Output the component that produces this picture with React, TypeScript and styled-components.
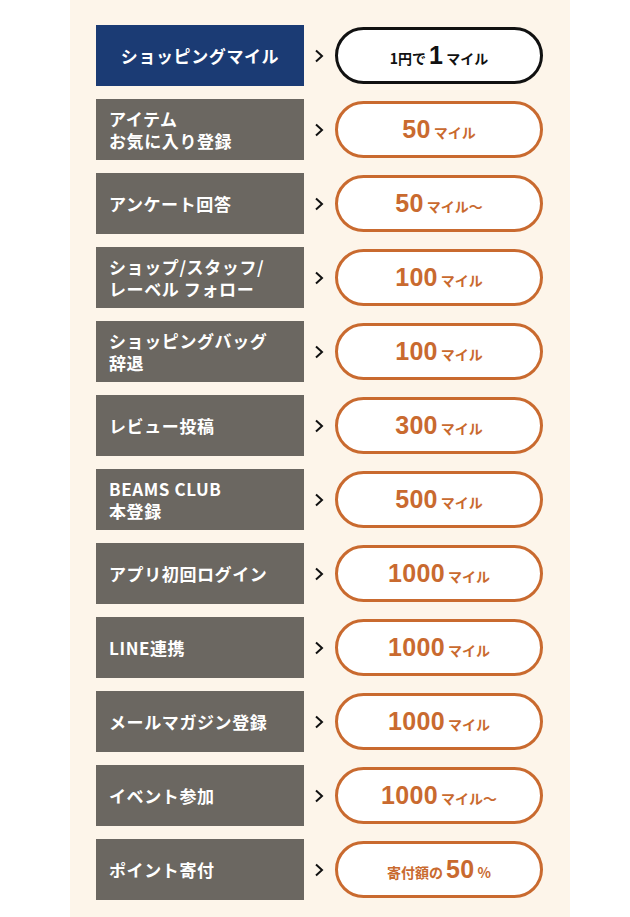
import React from "react";
import styled, { createGlobalStyle } from "styled-components";

const Global = createGlobalStyle`
  html, body { margin: 0; padding: 0; background: #ffffff; }
  body { font-family: "Noto Sans CJK JP", "Noto Sans", sans-serif; }
`;

const Page = styled.div`
  display: flex;
  justify-content: center;
  min-height: 917px;
`;

const Panel = styled.div`
  width: 500px;
  margin-left: 10px;
  background: #fdf5ea;
  padding: 25px 27px 17px 26px;
  box-sizing: border-box;
  display: flex;
  flex-direction: column;
  gap: 13px;
`;

const Row = styled.div`
  display: grid;
  grid-template-columns: 208px 31px 208px;
  align-items: center;
  height: 61px;
`;

const Label = styled.div<{ $primary?: boolean }>`
  height: 61px;
  box-sizing: border-box;
  background: ${(p) => (p.$primary ? "#1b3b74" : "#6b6761")};
  color: #ffffff;
  font-size: 17px;
  font-weight: 700;
  line-height: 22px;
  letter-spacing: 0.6px;
  display: flex;
  align-items: center;
  justify-content: ${(p) => (p.$primary ? "center" : "flex-start")};
  padding: 0 13px;
  white-space: pre-line;
`;

const Chevron = styled.div`
  display: flex;
  justify-content: center;
  align-items: center;
  padding-right: 2px;
`;

const Pill = styled.div<{ $primary?: boolean }>`
  height: 57px;
  box-sizing: border-box;
  border: 3px solid ${(p) => (p.$primary ? "#111111" : "#c96a2f")};
  border-radius: 29px;
  background: #ffffff;
  color: ${(p) => (p.$primary ? "#111111" : "#c96a2f")};
  display: flex;
  align-items: baseline;
  justify-content: center;
  padding-top: 12px;
  font-weight: 700;
`;

const Big = styled.span`
  font-family: "Liberation Sans", "Noto Sans", sans-serif;
  font-size: 25px;
  font-weight: 700;
  line-height: 26px;
  letter-spacing: 0.3px;
`;

const Small = styled.span<{ $gapLeft?: boolean; $gapRight?: boolean }>`
  font-size: 14px;
  font-weight: 700;
  line-height: 26px;
  margin-left: ${(p) => (p.$gapLeft ? "3px" : "0")};
  margin-right: ${(p) => (p.$gapRight ? "3px" : "0")};
`;

const ChevronIcon = () => (
  <svg width="10" height="14" viewBox="0 0 10 14">
    <path d="M2 1.5 L8 7 L2 12.5" fill="none" stroke="#111" strokeWidth="2" />
  </svg>
);

type Item = { label: string; value: React.ReactNode; primary?: boolean };

const miles = (n: string, suffix = "マイル") => (
  <>
    <Big>{n}</Big>
    <Small $gapLeft>{suffix}</Small>
  </>
);

const items: Item[] = [
  {
    label: "ショッピングマイル",
    primary: true,
    value: (
      <>
        <Small $gapRight>1円で</Small>
        <Big>1</Big>
        <Small $gapLeft>マイル</Small>
      </>
    ),
  },
  { label: "アイテム\nお気に入り登録", value: miles("50") },
  { label: "アンケート回答", value: miles("50", "マイル〜") },
  { label: "ショップ/スタッフ/\nレーベル フォロー", value: miles("100") },
  { label: "ショッピングバッグ\n辞退", value: miles("100") },
  { label: "レビュー投稿", value: miles("300") },
  { label: "BEAMS CLUB\n本登録", value: miles("500") },
  { label: "アプリ初回ログイン", value: miles("1000") },
  { label: "LINE連携", value: miles("1000") },
  { label: "メールマガジン登録", value: miles("1000") },
  { label: "イベント参加", value: miles("1000", "マイル〜") },
  {
    label: "ポイント寄付",
    value: (
      <>
        <Small $gapRight>寄付額の</Small>
        <Big>50</Big>
        <Small $gapLeft>%</Small>
      </>
    ),
  },
];

export default function App() {
  return (
    <>
      <Global />
      <Page>
        <Panel>
          {items.map((it) => (
            <Row key={it.label}>
              <Label $primary={it.primary}>{it.label}</Label>
              <Chevron>
                <ChevronIcon />
              </Chevron>
              <Pill $primary={it.primary}>{it.value}</Pill>
            </Row>
          ))}
        </Panel>
      </Page>
    </>
  );
}
